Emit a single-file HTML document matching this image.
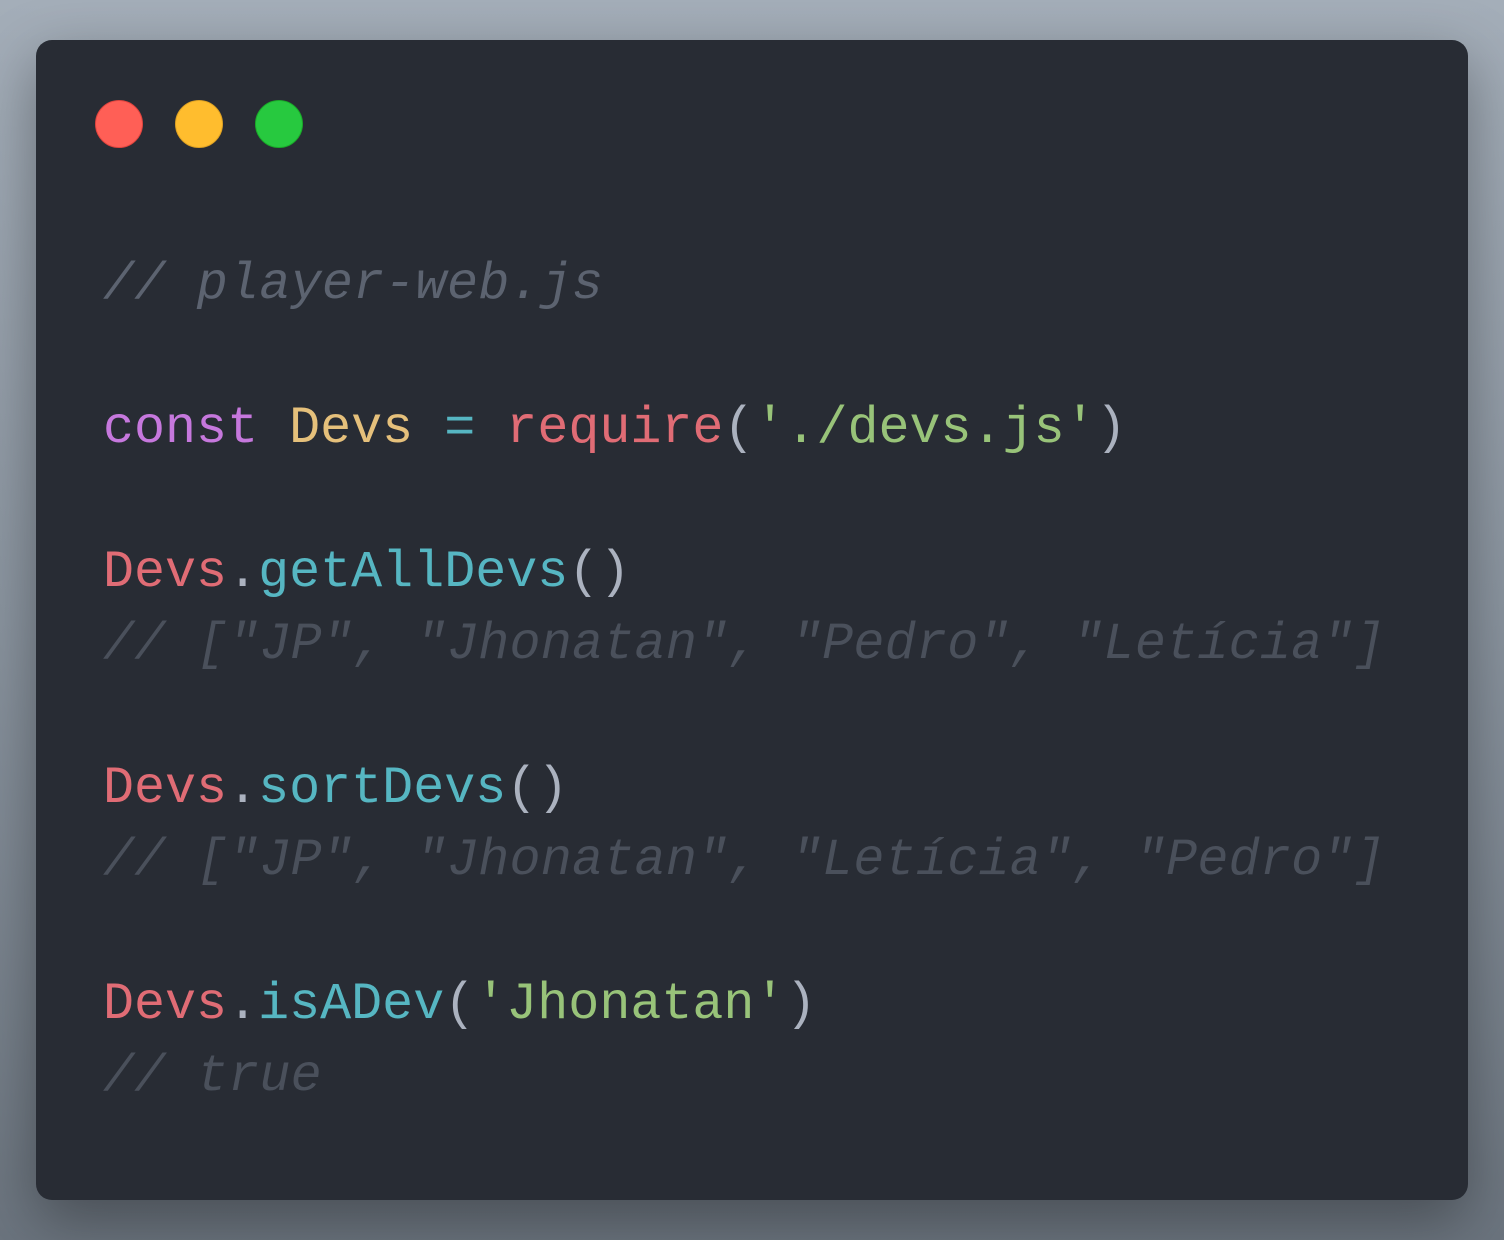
<!DOCTYPE html>
<html><head><meta charset="utf-8"><style>
html,body{margin:0;padding:0;}
body{width:1504px;height:1240px;background:linear-gradient(180deg,#a4aeb9 0%,#8a949f 50%,#6b747e 100%);position:relative;overflow:hidden;}
.win{position:absolute;left:36px;top:40px;width:1432px;height:1160px;background:#282c34;border-radius:16px;box-shadow:0 20px 60px rgba(0,0,0,0.35);}
.dot{position:absolute;top:60px;width:46px;height:46px;border-radius:50%;}
pre{position:absolute;left:67px;top:209px;margin:0;font-family:"Liberation Mono",monospace;font-size:51.7px;line-height:72px;color:#abb2bf;white-space:pre;}
.c{color:#5c6370;font-style:italic;letter-spacing:0.25px}
.c2{color:#4a505b;font-style:italic;letter-spacing:0.25px}
.k{color:#c678dd}.y{color:#e5c07b}.r{color:#e06c75}.f{color:#56b6c2}.s{color:#98c379}.p{color:#abb2bf}
</style></head><body>
<div class="win">
<div class="dot" style="left:59px;background:#ff5f56;border:1px solid #e0443e"></div>
<div class="dot" style="left:139px;background:#ffbd2e;border:1px solid #dea123"></div>
<div class="dot" style="left:219px;background:#27c93f;border:1px solid #1aab29"></div>
<pre><span class="c">// player-web.js</span>

<span class="k">const</span> <span class="y">Devs</span> <span class="f">=</span> <span class="r">require</span><span class="p">(</span><span class="s">'./devs.js'</span><span class="p">)</span>

<span class="r">Devs</span><span class="p">.</span><span class="f">getAllDevs</span><span class="p">()</span>
<span class="c2">// ["JP", "Jhonatan", "Pedro", "Letícia"]</span>

<span class="r">Devs</span><span class="p">.</span><span class="f">sortDevs</span><span class="p">()</span>
<span class="c2">// ["JP", "Jhonatan", "Letícia", "Pedro"]</span>

<span class="r">Devs</span><span class="p">.</span><span class="f">isADev</span><span class="p">(</span><span class="s">'Jhonatan'</span><span class="p">)</span>
<span class="c2">// true</span></pre>
</div>
</body></html>
